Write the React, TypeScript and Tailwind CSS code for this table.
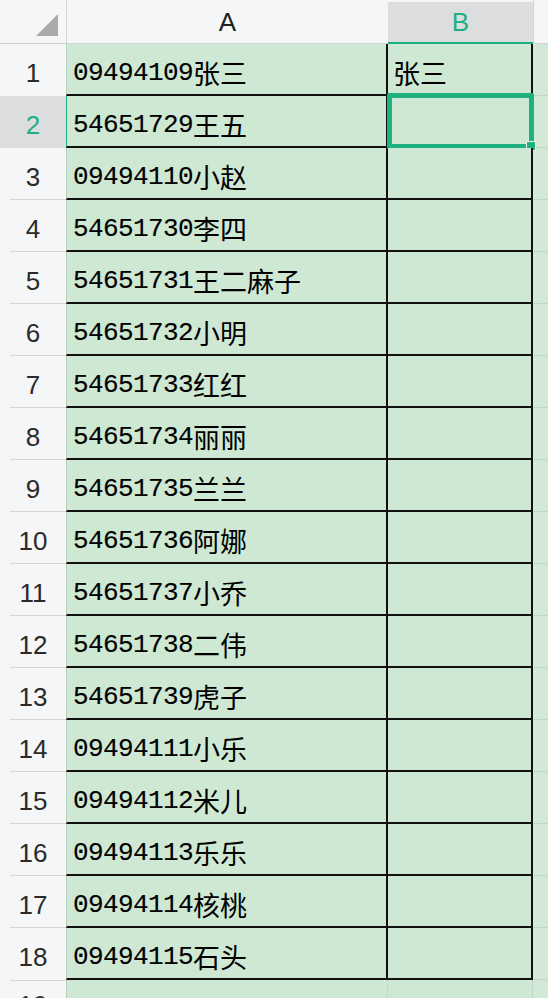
import React from "react";

const rows: [string, string, string][] = [
  ["09494109", "张三", "张三"],
  ["54651729", "王五", ""],
  ["09494110", "小赵", ""],
  ["54651730", "李四", ""],
  ["54651731", "王二麻子", ""],
  ["54651732", "小明", ""],
  ["54651733", "红红", ""],
  ["54651734", "丽丽", ""],
  ["54651735", "兰兰", ""],
  ["54651736", "阿娜", ""],
  ["54651737", "小乔", ""],
  ["54651738", "二伟", ""],
  ["54651739", "虎子", ""],
  ["09494111", "小乐", ""],
  ["09494112", "米儿", ""],
  ["09494113", "乐乐", ""],
  ["09494114", "核桃", ""],
  ["09494115", "石头", ""],
];

const cjk = { fontFamily: '"Noto Sans CJK SC", sans-serif' };
const mono = { fontFamily: '"Liberation Mono", monospace' };
const sans = { fontFamily: '"Liberation Sans", Arial, sans-serif' };

const App = () => {
  return (
    <div className="w-[548px] h-[998px] overflow-hidden bg-[#f5f6f7]">
      {/* column headers */}
      <div className="grid grid-cols-[66px_322px_145px_15px] h-[44px]">
        <div className="flex items-start justify-end pt-[14px] pr-[8px] border-b border-[#c9cbcd]">
          <div className="w-0 h-0 border-l-[22px] border-l-transparent border-b-[22px] border-b-[#a9aaab]" />
        </div>
        <div
          className="flex items-center justify-center pt-[2px] text-[26px] text-[#222] border-l border-[#d2d4d6] border-b border-[#c9cbcd]"
          style={sans}
        >
          A
        </div>
        <div
          className="flex items-center justify-center mt-[2px] text-[26px] text-[#1fb080] bg-[#dcdddf] border-b-2 border-[#1fb080]"
          style={sans}
        >
          B
        </div>
        <div className="border-l border-[#d2d4d6] border-b border-[#c9cbcd]" />
      </div>

      {rows.map(([num, name, b], i) => {
        const sel = i === 1;
        return (
          <div key={i} className="grid grid-cols-[66px_322px_145px_15px] h-[52px]">
            <div
              className={
                "relative flex items-center justify-center text-[26px] pt-[7px] " +
                (sel ? "bg-[#dcdddf] text-[#1fb080]" : "text-[#2a2a2a]")
              }
              style={sans}
            >
              {i + 1}
              {!sel && i !== 0 && i !== 2 && (
                <div className="absolute left-[10px] right-0 top-[-1px] h-px bg-[#d2d4d6]" />
              )}
            </div>
            <div
              className={
                "flex items-center pl-[6px] pt-[7px] bg-[#cfe8d3] border-b-2 border-r-2 border-[#111] border-l " +
                (sel ? "border-l-[#1fb080]" : "border-l-[#b9cfbd]")
              }
            >
              <span
                className="text-[26px] tracking-[-0.6px] text-black leading-none [-webkit-text-stroke:0.15px_black]"
                style={mono}
              >
                {num}
              </span>
              <span className="text-[27px] text-black leading-none" style={cjk}>
                {name}
              </span>
            </div>
            <div className="relative flex items-center pl-[5px] pt-[7px] bg-[#cfe8d3] border-b-2 border-r-2 border-[#111]">
              <span className="text-[27px] text-black leading-none" style={cjk}>
                {b}
              </span>
              {sel && (
                <>
                  <div className="absolute left-[-1px] right-[-3px] top-[-3px] bottom-[-3px] border-[5px] border-[#1fb080] rounded-[2px]" />
                  <div className="absolute right-[-5px] bottom-[-5px] w-[10px] h-[10px] bg-[#1fb080] border border-[#e8f5ec]" />
                </>
              )}
            </div>
            <div className="bg-[#d3e9d7] border-b border-[#c2d8c6]" />
          </div>
        );
      })}

      {/* partial row 19 */}
      <div className="grid grid-cols-[66px_322px_145px_15px] h-[52px]">
        <div className="relative flex items-start justify-center text-[26px] leading-none text-[#333] pt-[12px]" style={sans}>
          19
          <div className="absolute left-[10px] right-0 top-0 h-px bg-[#d2d4d6]" />
        </div>
        <div className="bg-[#cfe8d3] border-l border-[#b9cfbd] border-r border-r-[#c2d8c6]" />
        <div className="bg-[#cfe8d3] border-r border-[#c2d8c6]" />
        <div className="bg-[#d3e9d7]" />
      </div>
    </div>
  );
};

export default App;
